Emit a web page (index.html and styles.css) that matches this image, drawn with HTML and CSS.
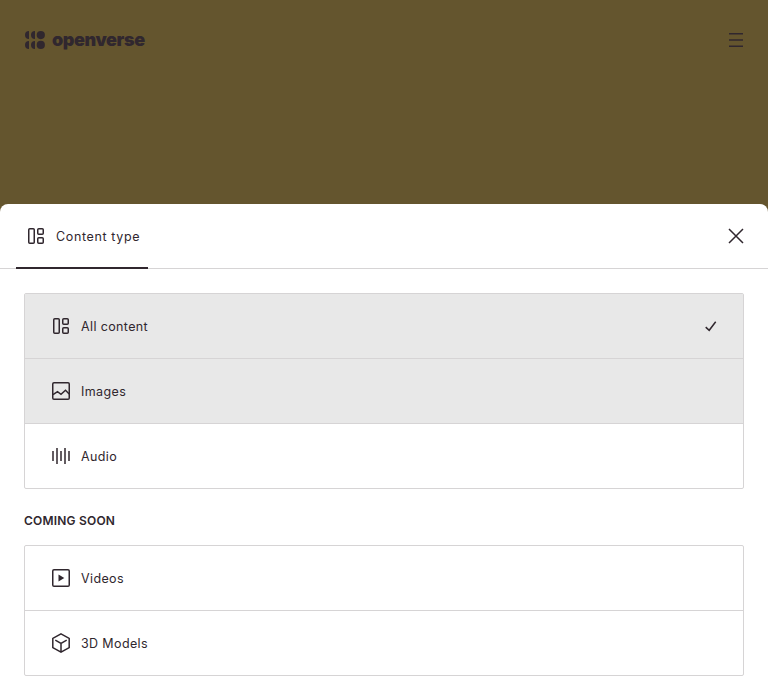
FILE: index.html
```html
<!DOCTYPE html>
<html lang="en">
<head>
<meta charset="utf-8">
<title>Openverse</title>
<link rel="stylesheet" href="styles.css">
</head>
<body>
<svg class="defs" aria-hidden="true">
  <symbol id="all" viewBox="0 0 24 24"><rect x="4.75" y="4.75" width="5.5" height="14.5" rx="1"/><rect x="13.75" y="4.75" width="5.5" height="5.5" rx="1"/><rect x="13.75" y="13.75" width="5.5" height="5.5" rx="1"/></symbol>
</svg>
<header class="header">
  <a class="logo">
    <svg class="mark" width="20" height="20" viewBox="0 0 20 20"><path d="M4 1.1v8a4 4 0 0 1 0-8zM10 1.1v8a4 4 0 0 1 0-8zM4 10.900v8a4 4 0 0 1 0-8zM10 10.900v8a4 4 0 0 1 0-8z"/><circle cx="15.8" cy="5.1" r="4.1"/><circle cx="15.8" cy="14.9" r="4.1"/></svg>
    <span class="wordmark">openverse</span>
  </a>
  <svg class="icon" viewBox="0 0 24 24"><path d="M5 5.75h14M5 12h14M5 18.25h14"/></svg>
</header>
<main class="modal">
  <div class="tabs">
    <div class="tab"><svg class="icon"><use href="#all"/></svg><span>Content type</span></div>
    <svg class="icon close" viewBox="0 0 24 24"><path d="M5 5l14 14M19 5L5 19"/></svg>
  </div>
  <div class="content">
    <ul class="list">
      <li class="item active"><svg class="icon"><use href="#all"/></svg><span>All content</span><svg class="icon check" viewBox="0 0 24 24"><path d="M6.700 13.100l3.500 3.200 6.500-8.600"/></svg></li>
      <li class="item active"><svg class="icon" viewBox="0 0 24 24"><rect x="3.75" y="3.75" width="16.5" height="16.5" rx="1.25"/><path d="M4 15.700l4.500-3 3.500 2.600 4.500-4 3.700 3.700"/></svg><span>Images</span></li>
      <li class="item"><svg class="icon" viewBox="0 0 24 24"><path d="M4 7v10M8 4v16M12 7v10M16 4v16M20 7v10"/></svg><span>Audio</span></li>
    </ul>
    <h2 class="heading">Coming soon</h2>
    <ul class="list">
      <li class="item"><svg class="icon" viewBox="0 0 24 24"><rect x="3.75" y="3.75" width="16.5" height="16.5" rx="1.25"/><path class="solid" d="M9.500 8.500v7l5.800-3.500z"/></svg><span>Videos</span></li>
      <li class="item"><svg class="icon" viewBox="0 0 24 24"><path d="M12 2.900l8.200 4.500v9.200L12 21.100l-8.200-4.500V7.400zM12 21v-8.700M6.300 9.200L12 12.400l5.700-3.200"/></svg><span>3D Models</span></li>
    </ul>
  </div>
</main>
</body>
</html>
```
FILE: styles.css
```css
* { box-sizing: border-box; }
body {
  margin: 0;
  height: 700px;
  overflow: hidden;
  display: flex;
  flex-direction: column;
  background: #64552e;
  color: #30272e;
  font: 400 12.5px/20px Inter, sans-serif;
  letter-spacing: 0.37px;
}
.defs { display: none; }
.header {
  height: 204px;
  padding: 28px 20px 0 24px;
  display: flex;
  justify-content: space-between;
  align-items: flex-start;
}
.logo { display: flex; height: 24px; padding: 2px 0 0 1px; gap: 7px; }
.mark { fill: #30272e; }
.wordmark {
  font-size: 18px;
  line-height: 20px;
  font-weight: 900;
  letter-spacing: -0.42px;
}
.icon {
  width: 24px;
  height: 24px;
  flex: none;
  fill: none;
  stroke: #30272e;
  stroke-width: 1.5;
}
.modal {
  flex: 1;
  background: #fff;
  border-radius: 8px 8px 0 0;
}
.tabs {
  height: 65px;
  padding: 0 20px 0 16px;
  border-bottom: 1px solid #d6d4d5;
  display: flex;
  justify-content: space-between;
}
.tab {
  width: 132px;
  height: 65px;
  padding: 0 8px;
  display: flex;
  align-items: center;
  gap: 8px;
  border-bottom: 2px solid #30272e;
  white-space: nowrap;
  letter-spacing: 0.63px;
}
.tab span { padding-top: 2px; }
.close { margin-top: 20px; }
.content { padding: 24px; }
.list {
  list-style: none;
  margin: 0;
  padding: 0;
  border: 1px solid #d6d4d5;
  border-radius: 2px;
}
.item {
  height: 65px;
  padding: 0 20px 0 24px;
  display: flex;
  align-items: center;
  gap: 8px;
}
.item span { padding-top: 1px; }
.item + .item { border-top: 1px solid #d6d4d5; }
.item:first-child { height: 64px; }
.active { background: #e8e8e8; }
.check { margin-left: auto; }
.solid { fill: #30272e; stroke: none; }
.heading {
  margin: 22px 0 14px;
  font-size: 12px;
  line-height: 20px;
  font-weight: 600;
  text-transform: uppercase;
  letter-spacing: 0.2px;
}
```
